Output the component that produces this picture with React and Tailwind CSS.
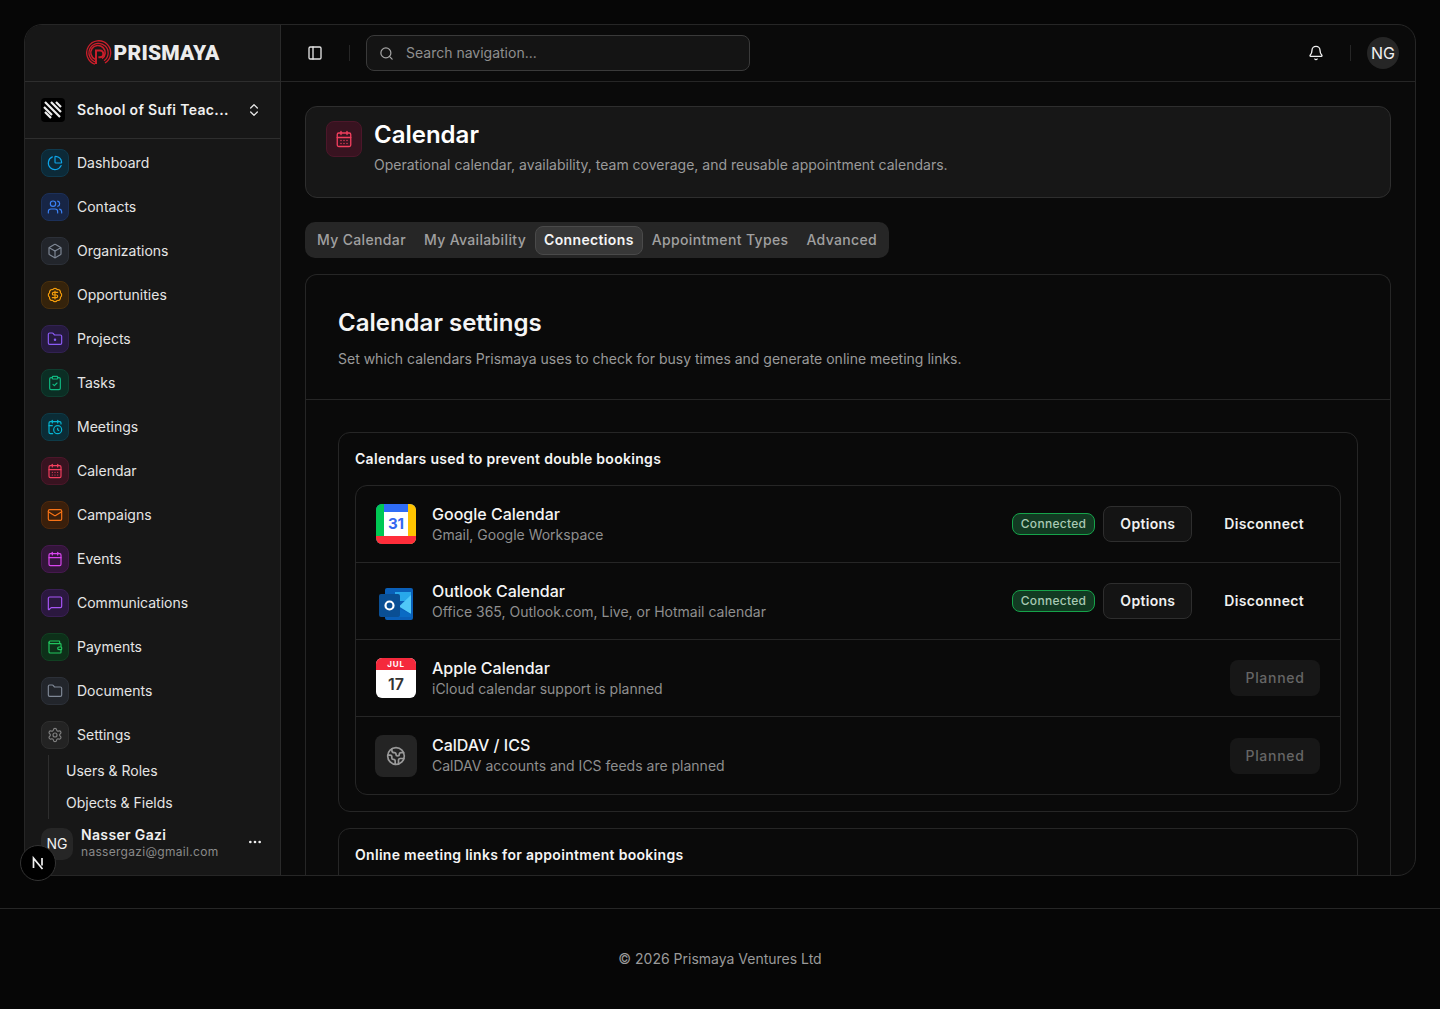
import React from 'react';
import {
  ChartPie, Users, Box, BadgeDollarSign, FolderDot, ClipboardCheck, CalendarClock, CalendarDays, Mail,
  Calendar, MessageSquare, Wallet, Folder, Settings, ChevronsUpDown, Ellipsis, PanelLeft, Search, Bell, Earth,
} from 'lucide-react';

const navItems = [
  { label: 'Dashboard', icon: ChartPie, box: 'bg-[#0c2a38] border-[#0f3a4e] text-[#0ea5e9]' },
  { label: 'Contacts', icon: Users, box: 'bg-[#172545] border-[#1c3059] text-[#3b82f6]' },
  { label: 'Organizations', icon: Box, box: 'bg-[#22252b] border-[#2c3038] text-[#7f8896]' },
  { label: 'Opportunities', icon: BadgeDollarSign, box: 'bg-[#35230b] border-[#4a300d] text-[#f59e0b]' },
  { label: 'Projects', icon: FolderDot, box: 'bg-[#261a3f] border-[#322253] text-[#8b5cf6]' },
  { label: 'Tasks', icon: ClipboardCheck, box: 'bg-[#0b2e24] border-[#0f3e30] text-[#10b981]' },
  { label: 'Meetings', icon: CalendarClock, box: 'bg-[#0b2c36] border-[#0e3b48] text-[#06b6d4]' },
  { label: 'Calendar', icon: CalendarDays, box: 'bg-[#381320] border-[#4c172a] text-[#f43f5e]' },
  { label: 'Campaigns', icon: Mail, box: 'bg-[#3a1f0b] border-[#50290c] text-[#f97316]' },
  { label: 'Events', icon: Calendar, box: 'bg-[#33153a] border-[#46194f] text-[#d946ef]' },
  { label: 'Communications', icon: MessageSquare, box: 'bg-[#2b183f] border-[#3a1f55] text-[#a855f7]' },
  { label: 'Payments', icon: Wallet, box: 'bg-[#0d3019] border-[#114022] text-[#22c55e]' },
  { label: 'Documents', icon: Folder, box: 'bg-[#22252b] border-[#2c3038] text-[#7f8896]' },
  { label: 'Settings', icon: Settings, box: 'bg-[#232323] border-[#2e2e2e] text-[#808080]' },
];

const Logo = () => (
  <div className="flex items-center gap-[1px]">
    <svg width="27" height="26" viewBox="0 0 27 26" fill="none" stroke="#c81e2a" strokeWidth="1.3">
      <path d="M9 24.2A12 12 0 1 1 19 23" />
      <path d="M9 21.8A9.6 9.6 0 1 1 18 20.8" />
      <path d="M9 19.2A7.2 7.2 0 1 1 16 18.6" strokeWidth="1.6" />
      <path d="M10 24V10.5h4a3.4 3.4 0 0 1 0 6.8h-1.6" strokeWidth="2" />
    </svg>
    <span className="font-['Roboto',sans-serif] font-black text-[21px] leading-none tracking-[0.2px] text-[#ececec]">PRISMAYA</span>
  </div>
);

const OrgMark = () => (
  <div className="size-6 rounded-[4px] bg-black overflow-hidden shrink-0">
    <svg width="24" height="24" viewBox="0 0 24 24" stroke="#ededed" strokeWidth="2.2">
      <path d="M3 9l8 8M4 4l15 15M10 4l10 10M4 14l6 6M15 4l5 5" />
    </svg>
  </div>
);

const Sidebar = () => (
  <aside className="w-[256px] shrink-0 flex flex-col bg-[#171717] border-r border-[#2a2a2a]">
    <div className="h-[57px] shrink-0 flex items-center justify-center border-b border-[#2e2e2e]">
      <Logo />
    </div>
    <div className="h-[57px] shrink-0 flex items-center gap-3 pl-4 pr-[18px] border-b border-[#2e2e2e]">
      <OrgMark />
      <span className="flex-1 truncate text-sm font-semibold tracking-[0.35px] text-[#f0f0f0]">School of Sufi Teac...</span>
      <ChevronsUpDown size={16} className="text-[#e5e5e5]" />
    </div>
    <nav className="flex-1 px-4 pt-[2px] flex flex-col">
      {navItems.map((item) => (
        <a key={item.label} className="h-11 shrink-0 flex items-center gap-2 text-sm text-[#e5e5e5]">
          <span className={`size-7 rounded-lg border flex items-center justify-center ${item.box}`}>
            <item.icon size={16} strokeWidth={1.75} />
          </span>
          {item.label}
        </a>
      ))}
      <div className="ml-[7px] border-l border-[#2e2e2e] pl-[17px] -mt-[2px] flex flex-col">
        <a className="h-8 flex items-center text-sm text-[#e5e5e5]">Users &amp; Roles</a>
        <a className="h-8 flex items-center text-sm text-[#e5e5e5]">Objects &amp; Fields</a>
      </div>
    </nav>
    <div className="h-[52px] shrink-0 flex items-start gap-2 pl-4 pr-[17px] pt-[5px] relative">
      <span className="size-8 rounded-[10px] bg-[#262626] flex items-center justify-center text-sm text-[#f0f0f0]">NG</span>
      <div className="flex-1 min-w-0 -mt-[3px]">
        <div className="text-sm font-semibold tracking-[0.35px] leading-5 text-[#f0f0f0]">Nasser Gazi</div>
        <div className="text-xs tracking-[0.3px] leading-[14px] text-[#8a8a8a]">nassergazi@gmail.com</div>
      </div>
      <Ellipsis size={16} className="text-[#f0f0f0] mt-[6px]" />
    </div>
  </aside>
);

const Topbar = () => (
  <header className="h-[57px] shrink-0 flex items-center border-b border-[#262626] pl-6 pr-4">
    <PanelLeft size={16} className="text-[#e5e5e5] ml-[2px]" />
    <span className="w-px h-4 bg-[#262626] ml-[26px] mr-4" />
    <label className="w-[384px] h-9 flex items-center gap-3 rounded-lg border border-[#3a3a3a] bg-[#141414] pl-3">
      <Search size={15} className="text-[#a3a3a3]" />
      <span className="text-sm text-[#8f8f8f]">Search navigation...</span>
    </label>
    <div className="ml-auto flex items-center">
      <Bell size={16} className="text-[#f0f0f0]" />
      <span className="w-px h-4 bg-[#262626] ml-[26px] mr-4" />
      <span className="size-8 rounded-full bg-[#262626] flex items-center justify-center text-base text-[#f0f0f0]">NG</span>
    </div>
  </header>
);

const GoogleIcon = () => (
  <div className="size-10 rounded-[6px] overflow-hidden shrink-0 relative bg-[#2f6df6]">
    <div className="absolute left-0 top-0 bottom-0 w-2 bg-[#00c853]" />
    <div className="absolute right-0 top-0 bottom-0 w-2 bg-[#ffc400]" />
    <div className="absolute left-0 right-0 bottom-0 h-2 bg-[#ff2d3a]" />
    <div className="absolute left-2 right-2 top-2 bottom-2 bg-white flex items-center justify-center text-[15px] font-bold text-[#3367f0] font-['Inter',sans-serif]">31</div>
  </div>
);

const OutlookIcon = () => (
  <svg width="40" height="40" viewBox="0 0 40 40" className="shrink-0">
    <rect x="9" y="7" width="28" height="32" rx="2" fill="#0a5fb8" />
    <path d="M19 11h16v9H19z" fill="#28a8ea" />
    <path d="M35 14v19l-12-7.500z" fill="#50c8f8" />
    <path d="M20 26l15 7v3H20z" fill="#0a6bc4" />
    <rect x="3" y="13" width="21" height="23" rx="2" fill="#0a4f94" />
    <circle cx="13.500" cy="24.500" r="4" fill="none" stroke="#fff" strokeWidth="2.200" />
  </svg>
);

const AppleIcon = () => (
  <div className="size-10 rounded-[6px] overflow-hidden shrink-0 bg-white flex flex-col">
    <div className="h-3 bg-[#f5293c] flex items-center justify-center text-[8px] leading-none font-bold tracking-[0.8px] text-white">JUL</div>
    <div className="flex-1 flex items-center justify-center text-base font-semibold text-[#333]">17</div>
  </div>
);

const CaldavIcon = () => (
  <div className="size-[42px] -mx-px rounded-lg bg-[#242424] flex items-center justify-center shrink-0">
    <Earth size={20} className="text-[#9a9a9a]" />
  </div>
);

const Connected = () => (
  <>
    <span className="h-[22px] px-2 rounded-lg border border-[#16a34a] bg-[#123a22] flex items-center text-xs font-medium tracking-[0.3px] text-[#a9c9b4]">Connected</span>
    <button className="h-9 w-[89px] rounded-lg border border-[#2e2e2e] bg-[#141414] text-sm font-semibold tracking-[0.3px] text-[#f0f0f0]">Options</button>
    <button className="h-9 pl-4 pr-4 mr-[-0px] ml-2 text-sm font-semibold tracking-[0.3px] text-[#f0f0f0]">Disconnect</button>
  </>
);

const Planned = () => (
  <span className="h-9 w-[90px] rounded-lg bg-[#171717] flex items-center justify-center text-sm font-medium tracking-[0.7px] text-[#666]">Planned</span>
);

const calendars = [
  { name: 'Google Calendar', desc: 'Gmail, Google Workspace', icon: GoogleIcon, on: true },
  { name: 'Outlook Calendar', desc: 'Office 365, Outlook.com, Live, or Hotmail calendar', icon: OutlookIcon, on: true },
  { name: 'Apple Calendar', desc: 'iCloud calendar support is planned', icon: AppleIcon, on: false },
  { name: 'CalDAV / ICS', desc: 'CalDAV accounts and ICS feeds are planned', icon: CaldavIcon, on: false },
];

const tabs = ['My Calendar', 'My Availability', 'Connections', 'Appointment Types', 'Advanced'];

const Main = () => (
  <main className="flex-1 min-h-0 overflow-hidden px-6 pt-6">
    <section className="h-[92px] rounded-xl border border-[#2e2e2e] bg-[#171717] flex gap-3 px-5 pt-[14px]">
      <span className="size-9 rounded-lg border border-[#4c172a] bg-[#381320] flex items-center justify-center text-[#f43f5e]">
        <CalendarDays size={18} strokeWidth={1.75} />
      </span>
      <div>
        <h1 className="text-2xl font-semibold leading-7 text-white">Calendar</h1>
        <p className="mt-[6px] text-sm leading-5 text-[#9a9a9a]">Operational calendar, availability, team coverage, and reusable appointment calendars.</p>
      </div>
    </section>

    <div className="mt-6 h-9 w-fit rounded-[10px] bg-[#262626] flex items-center px-[3px]">
      {tabs.map((t) => (
        t === 'Connections'
          ? <span key={t} className="h-[29px] px-2 flex items-center rounded-lg border border-[#4a4a4a] bg-[#383838] text-sm font-semibold tracking-[0.35px] text-[#f5f5f5]">{t}</span>
          : <span key={t} className="h-[29px] px-[9px] flex items-center text-sm font-medium tracking-[0.35px] text-[#a0a0a0]">{t}</span>
      ))}
    </div>

    <section className="mt-4 rounded-xl border border-[#262626] border-b-0">
      <div className="h-[125px] px-8 pt-[32px] border-b border-[#262626]">
        <h2 className="text-2xl font-semibold leading-8 text-[#f5f5f5]">Calendar settings</h2>
        <p className="mt-[10px] text-sm leading-5 text-[#9a9a9a]">Set which calendars Prismaya uses to check for busy times and generate online meeting links.</p>
      </div>
      <div className="px-8 pt-8 flex flex-col gap-4">
        <div className="rounded-xl border border-[#262626] p-4 pt-[16px]">
          <h3 className="text-sm font-semibold tracking-[0.3px] leading-5 text-[#f5f5f5]">Calendars used to prevent double bookings</h3>
          <div className="mt-4 rounded-xl border border-[#262626] flex flex-col divide-y divide-[#262626]">
            {calendars.map((c) => (
              <div key={c.name} className="h-[77px] flex items-center px-5">
                <c.icon />
                <div className="ml-4">
                  <div className="text-base font-medium leading-5 text-[#f5f5f5]">{c.name}</div>
                  <div className="text-sm leading-5 mt-[1px] text-[#8f8f8f]">{c.desc}</div>
                </div>
                <div className="ml-auto flex items-center gap-2">
                  {c.on ? <Connected /> : <Planned />}
                </div>
              </div>
            ))}
          </div>
        </div>
        <div className="rounded-xl border border-[#262626] p-4">
          <h3 className="text-sm font-semibold tracking-[0.3px] leading-5 text-[#f5f5f5]">Online meeting links for appointment bookings</h3>
          <div className="h-40" />
        </div>
      </div>
    </section>
  </main>
);

export default function App() {
  return (
    <div className="h-[1009px] overflow-hidden bg-[#060606] font-['Inter',sans-serif] relative">
      <div className="px-6 pt-6 pb-8">
        <div className="h-[852px] flex rounded-[18px] border border-[#262626] bg-[#0a0a0a] overflow-hidden">
          <Sidebar />
          <div className="flex-1 min-w-0 flex flex-col">
            <Topbar />
            <Main />
          </div>
        </div>
      </div>
      <footer className="border-t border-[#262626] pt-[40px] text-center text-sm leading-5 text-[#9a9a9a]">© 2026 Prismaya Ventures Ltd</footer>
      <div className="absolute left-5 top-[845px] size-9 rounded-full bg-black border border-[#333] flex items-center justify-center">
        <svg width="16" height="16" viewBox="0 0 16 16" fill="none" stroke="#f0f0f0" strokeWidth="1.700">
          <path d="M3.500 13V3.200L12.500 14M12 3v7.500" />
        </svg>
      </div>
    </div>
  );
}
